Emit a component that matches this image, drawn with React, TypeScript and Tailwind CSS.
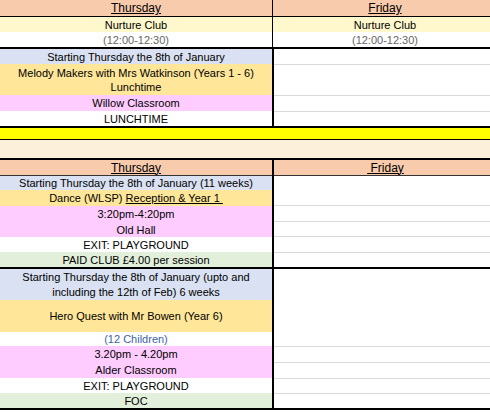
import type { ReactNode } from "react";

// Two-column club timetable, spreadsheet style
const PEACH = "bg-[#f8cbad]";
const LIGHT_YELLOW = "bg-[#fff8cc]";
const BLUE = "bg-[#d9e1f2]";
const GOLD = "bg-[#ffe699]";
const PINK = "bg-[#ffccff]";
const GREEN = "bg-[#e2efda]";

function Cell({
  h,
  bg = "",
  children,
  className = "",
}: {
  h: string;
  bg?: string;
  children?: ReactNode;
  className?: string;
}) {
  return (
    <div
      className={`${h} ${bg} ${className} flex flex-col items-center justify-center whitespace-pre leading-[14px]`}
    >
      {children}
    </div>
  );
}

function Blank({ h, last = false }: { h: string; last?: boolean }) {
  return <div className={`${h} ${last ? "" : "border-b border-[#d9d9d9]"}`} />;
}

function Thick() {
  return <div className="h-[2px] bg-black" />;
}

export default function App() {
  return (
    <div className="w-[490px] h-[413px] overflow-hidden bg-white text-[11px] text-black font-['Liberation_Sans',Arial,sans-serif]">
      <div className="w-[497px]">
        {/* top table head */}
        <div className="flex">
          <div className="w-[273px] border-r border-black">
            <Cell h="h-[17px]" bg={PEACH} className="border-b border-black text-[12px]">
              <span className="underline">Thursday</span>
            </Cell>
            <Cell h="h-[15px]" bg={LIGHT_YELLOW}>Nurture Club</Cell>
            <Cell h="h-[15px]" className="text-[#666]">(12:00-12:30)</Cell>
          </div>
          <div className="w-[224px]">
            <Cell h="h-[17px]" bg={PEACH} className="border-b border-black text-[12px]">
              <span className="underline">Friday</span>
            </Cell>
            <Cell h="h-[15px]" bg={LIGHT_YELLOW}>Nurture Club</Cell>
            <Cell h="h-[15px]" className="text-[#666]">(12:00-12:30)</Cell>
          </div>
        </div>
        <Thick />

        {/* lunchtime club */}
        <div className="flex">
          <div className="w-[274px] border-r-2 border-black">
            <Cell h="h-[15px]" bg={BLUE}>Starting Thursday the 8th of January</Cell>
            <Cell h="h-[31px]" bg={GOLD}>
              <span>Melody Makers with Mrs Watkinson (Years 1 - 6)</span>
              <span>Lunchtime</span>
            </Cell>
            <Cell h="h-[16px]" bg={PINK}>Willow Classroom</Cell>
            <Cell h="h-[15px]">LUNCHTIME</Cell>
          </div>
          <div className="w-[223px]">
            <Blank h="h-[16px]" />
            <Blank h="h-[31px]" />
            <Blank h="h-[16px]" />
            <Blank h="h-[14px]" last />
          </div>
        </div>
        <Thick />

        <div className="h-[11px] bg-[#ffff00]" />
        <div className="h-px bg-black" />
        <div className="h-[18px] bg-[#fdf0da]" />
        <Thick />

        {/* after school clubs */}
        <div className="flex">
          <div className="w-[274px] border-r-2 border-black">
            <Cell h="h-[16px]" bg={PEACH} className="border-b border-[#333] text-[12px]">
              <span className="underline">Thursday</span>
            </Cell>
            <Cell h="h-[14px]" bg={BLUE}>Starting Thursday the 8th of January (11 weeks)</Cell>
            <Cell h="h-[16px]" bg={GOLD}>
              <span>
                Dance (WLSP) <span className="underline">Reception &amp; Year 1 </span>
              </span>
            </Cell>
            <Cell h="h-[16px]" bg={PINK}>3:20pm-4:20pm</Cell>
            <Cell h="h-[15px]" bg={PINK}>Old Hall</Cell>
            <Cell h="h-[15px]">EXIT: PLAYGROUND</Cell>
            <Cell h="h-[15px]" bg={GREEN}>PAID CLUB £4.00 per session</Cell>
          </div>
          <div className="w-[223px]">
            <Cell h="h-[16px]" bg={PEACH} className="border-b border-[#333] text-[12px]">
              <span className="underline"> Friday</span>
            </Cell>
            <Blank h="h-[30px]" />
            <Blank h="h-[16px]" />
            <Blank h="h-[15px]" />
            <Blank h="h-[16px]" />
            <Blank h="h-[14px]" last />
          </div>
        </div>
        <Thick />

        <div className="flex">
          <div className="w-[274px] border-r-2 border-black">
            <Cell h="h-[31px]" bg={BLUE} className="leading-[15px]">
              <span>Starting Thursday the 8th of January (upto and</span>
              <span>including the 12th of Feb) 6 weeks</span>
            </Cell>
            <Cell h="h-[32px]" bg={GOLD}>Hero Quest with Mr Bowen (Year 6)</Cell>
            <Cell h="h-[14px]" className="text-[#3d63a6]">(12 Children)</Cell>
            <Cell h="h-[16px]" bg={PINK}>3.20pm - 4.20pm</Cell>
            <Cell h="h-[16px]" bg={PINK}>Alder Classroom</Cell>
            <Cell h="h-[15px]">EXIT: PLAYGROUND</Cell>
            <Cell h="h-[15px]" bg={GREEN}>FOC</Cell>
          </div>
          <div className="w-[223px]">
            <Blank h="h-[78px]" />
            <Blank h="h-[16px]" />
            <Blank h="h-[16px]" />
            <Blank h="h-[15px]" />
            <Blank h="h-[14px]" last />
          </div>
        </div>
        <Thick />
      </div>
    </div>
  );
}
